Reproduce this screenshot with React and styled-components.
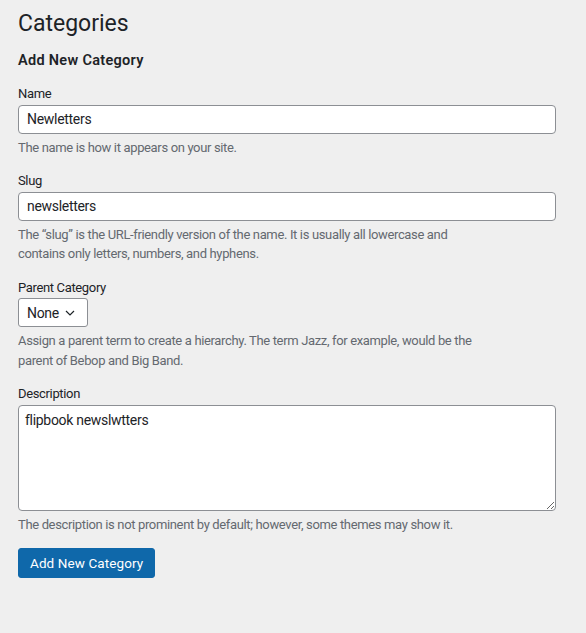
import styled, { createGlobalStyle } from "styled-components";

const GlobalStyle = createGlobalStyle`
  html, body {
    margin: 0;
    padding: 0;
    background: #efefef;
  }
  body {
    font-family: Roboto, "Liberation Sans", sans-serif;
    font-size: 13px;
    color: #1d2327;
  }
`;

const Page = styled.div`
  min-height: 633px;
  padding: 9px 30px 0 18px;
  box-sizing: border-box;
`;

const Title = styled.h1`
  margin: 0;
  font-size: 23px;
  font-weight: 400;
  line-height: 30px;
`;

const Heading = styled.h2`
  margin: 12px 0 0;
  font-size: 14.5px;
  font-weight: 600;
  line-height: 20px;
  letter-spacing: 0.3px;
`;

const Form = styled.form`
  margin-top: 13px;
  letter-spacing: -0.35px;
`;

const Field = styled.div`
  margin-bottom: 14px;
`;

const Label = styled.label`
  display: block;
  line-height: 19.5px;
  margin-bottom: 1px;
`;

const TextInput = styled.input`
  display: block;
  width: 100%;
  height: 29px;
  box-sizing: border-box;
  border: 1px solid #8c8f94;
  border-radius: 4px;
  background: #fff;
  padding: 0 8px;
  font: inherit;
  font-size: 14px;
  letter-spacing: -0.3px;
  color: #1d2327;
  outline: none;
`;

const Help = styled.p`
  margin: 4px 0 0;
  max-width: 466px;
  line-height: 19.5px;
  color: #646970;
`;

const SelectBox = styled.div`
  display: inline-flex;
  align-items: center;
  gap: 6px;
  height: 29px;
  box-sizing: border-box;
  border: 1px solid #8c8f94;
  border-radius: 3px;
  background: #fff;
  padding: 0 12px 0 8px;
  font-size: 14px;
`;

const TextArea = styled.textarea`
  display: block;
  width: 100%;
  height: 106px;
  box-sizing: border-box;
  border: 1px solid #8c8f94;
  border-radius: 4px;
  background: #fff;
  padding: 5px 6px;
  font: inherit;
  font-size: 14px;
  letter-spacing: -0.3px;
  line-height: 1.4;
  color: #1d2327;
  outline: none;
  resize: vertical;
`;

const Button = styled.button`
  display: block;
  height: 30px;
  padding: 0 11px;
  border: 1px solid #0f68aa;
  border-radius: 3px;
  background: #0f68aa;
  color: #fff;
  font: inherit;
  font-size: 13.5px;
  letter-spacing: 0.1px;
  cursor: pointer;
`;

const Chevron = () => (
  <svg width="10" height="6" viewBox="0 0 10 6" fill="none">
    <path d="M1 1l4 4 4-4" stroke="#1d2327" strokeWidth="1.2" />
  </svg>
);

export default function App() {
  return (
    <>
      <GlobalStyle />
      <Page>
        <Title>Categories</Title>
        <Heading>Add New Category</Heading>
        <Form onSubmit={(e) => e.preventDefault()}>
          <Field>
            <Label>Name</Label>
            <TextInput defaultValue="Newletters" />
            <Help>The name is how it appears on your site.</Help>
          </Field>
          <Field>
            <Label>Slug</Label>
            <TextInput defaultValue="newsletters" />
            <Help>
              The “slug” is the URL-friendly version of the name. It is usually all lowercase and
              contains only letters, numbers, and hyphens.
            </Help>
          </Field>
          <Field>
            <Label>Parent Category</Label>
            <SelectBox>
              None <Chevron />
            </SelectBox>
            <Help>
              Assign a parent term to create a hierarchy. The term Jazz, for example, would be the
              parent of Bebop and Big Band.
            </Help>
          </Field>
          <Field>
            <Label>Description</Label>
            <TextArea defaultValue="flipbook newslwtters" />
            <Help>The description is not prominent by default; however, some themes may show it.</Help>
          </Field>
          <Button type="submit">Add New Category</Button>
        </Form>
      </Page>
    </>
  );
}
